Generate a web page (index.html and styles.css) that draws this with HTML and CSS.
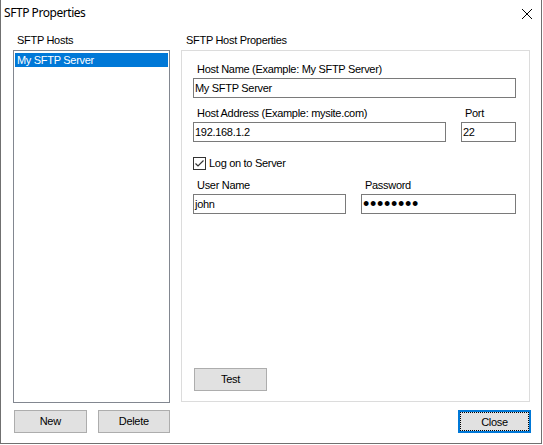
FILE: index.html
```html
<!DOCTYPE html>
<html lang="en">
<head>
<meta charset="utf-8">
<title>SFTP Properties</title>
<link rel="stylesheet" href="styles.css">
</head>
<body>
<div class="window">
  <div class="titlebar">
    <span class="title">SFTP Properties</span>
    <svg class="close-x" width="10" height="10" viewBox="0 0 10 10" aria-label="Close">
      <path d="M0 0L10 10M10 0L0 10" stroke="#000" stroke-width="1" fill="none"/>
    </svg>
  </div>

  <div class="dialog-body">
    <div class="col col-hosts">
      <div class="caption">SFTP Hosts</div>
      <div class="listbox">
        <div class="item selected">My SFTP Server</div>
      </div>
      <div class="btn-row">
        <button class="btn">New</button>
        <button class="btn">Delete</button>
      </div>
    </div>

    <div class="col col-props">
      <div class="caption caption-props">SFTP Host Properties</div>
      <div class="group">
        <div class="field">
          <div class="label">Host Name (Example: My SFTP Server)</div>
          <div class="textbox">My SFTP Server</div>
        </div>

        <div class="row row-address">
          <div class="field f-address">
            <div class="label">Host Address (Example: mysite.com)</div>
            <div class="textbox">192.168.1.2</div>
          </div>
          <div class="field f-port">
            <div class="label">Port</div>
            <div class="textbox">22</div>
          </div>
        </div>

        <div class="check-row">
          <svg class="checkbox" width="13" height="13" viewBox="0 0 13 13">
            <rect x="0.5" y="0.5" width="12" height="12" fill="#fff" stroke="#333"/>
            <polyline points="2.5,6.5 5,9 10.5,3.5" fill="none" stroke="#333" stroke-width="1.2"/>
          </svg>
          <span class="check-label">Log on to Server</span>
        </div>

        <div class="row row-login">
          <div class="field f-user">
            <div class="label">User Name</div>
            <div class="textbox">john</div>
          </div>
          <div class="field f-pass">
            <div class="label">Password</div>
            <div class="textbox password">••••••••</div>
          </div>
        </div>

        <button class="btn btn-test">Test</button>
      </div>
      <div class="btn-row btn-row-end">
        <button class="btn btn-default">Close</button>
      </div>
    </div>
  </div>
</div>
</body>
</html>
```

FILE: styles.css
```css
html, body {
  margin: 0;
  background: #ffffff;
}

body {
  font-family: "Liberation Sans", Arial, sans-serif;
  font-size: 11px;
  letter-spacing: -0.3px;
  color: #000;
}

.window {
  width: 540px;
  height: 443px;
  border: 1px solid #707070;
  border-top: none;
  background: #ffffff;
  display: flex;
  flex-direction: column;
}

/* title bar */
.titlebar {
  height: 30px;
  flex: none;
  display: flex;
  justify-content: space-between;
  align-items: flex-start;
  padding: 0 9px 0 3px;
}

.title {
  font-family: "Noto Sans", "Open Sans", sans-serif;
  font-size: 12px;
  line-height: 16px;
  letter-spacing: -0.45px;
  margin-top: 5px;
}

.close-x {
  margin-top: 9px;
  display: block;
}

/* two columns: host list and host properties */
.dialog-body {
  flex: 1;
  display: grid;
  grid-template-columns: 157px 349px;
  column-gap: 11px;
  padding: 4px 11px 10px 12px;
}

.col {
  display: flex;
  flex-direction: column;
  min-height: 0;
}

.caption {
  line-height: 13px;
  height: 13px;
  margin-bottom: 3px;
  padding-left: 4px;
  white-space: nowrap;
}

.caption-props {
  padding-left: 5px;
}

/* host list */
.listbox {
  flex: 1;
  border: 1px solid #828790;
  padding: 1px;
  background: #fff;
}

.item {
  height: 14px;
  line-height: 14px;
  padding-left: 2px;
  margin-top: 1px;
  white-space: nowrap;
}

.item.selected {
  background: #0078d7;
  color: #fff;
}

/* buttons */
.btn-row {
  display: flex;
  gap: 11px;
  margin-top: 7px;
  padding-left: 1px;
  height: 23px;
}

.col-props .btn-row {
  margin-top: 8px;
}

.btn-row-end {
  justify-content: flex-end;
  margin-right: -1px;
}

.btn {
  box-sizing: border-box;
  width: 73px;
  height: 23px;
  margin: 0;
  padding: 0;
  border: 1px solid #adadad;
  background: #e1e1e1;
  font: inherit;
  letter-spacing: inherit;
  color: #000;
  line-height: 21px;
  text-align: center;
}

.btn-default {
  border: 2px solid #0078d7;
  outline: 1px dotted #000;
  outline-offset: -3px;
}

.btn-test {
  margin-top: auto;
  margin-left: 1px;
}

/* host properties group */
.group {
  flex: 1;
  border: 1px solid #dcdcdc;
  padding: 12px 13px 10px 11px;
  display: flex;
  flex-direction: column;
}

.field {
  display: flex;
  flex-direction: column;
}

.label {
  line-height: 13px;
  height: 13px;
  padding-left: 4px;
  margin-bottom: 2px;
  white-space: nowrap;
}

.textbox {
  box-sizing: border-box;
  height: 20px;
  border: 1px solid #7a7a7a;
  background: #fff;
  padding-left: 1px;
  line-height: 18px;
  white-space: nowrap;
  overflow: hidden;
}

.textbox.password {
  font-size: 18px;
  line-height: 18px;
  letter-spacing: 0.7px;
}

.row {
  display: flex;
  gap: 15px;
}

.row-address {
  margin-top: 9px;
}

.f-address { width: 253px; }
.f-port { width: 55px; }

.f-user { width: 153px; }
.f-pass { width: 155px; }

.check-row {
  display: flex;
  align-items: center;
  gap: 3px;
  margin-top: 15px;
  height: 13px;
}

.checkbox {
  display: block;
  flex: none;
}

.check-label {
  line-height: 13px;
}

.row-login {
  margin-top: 9px;
}
```
